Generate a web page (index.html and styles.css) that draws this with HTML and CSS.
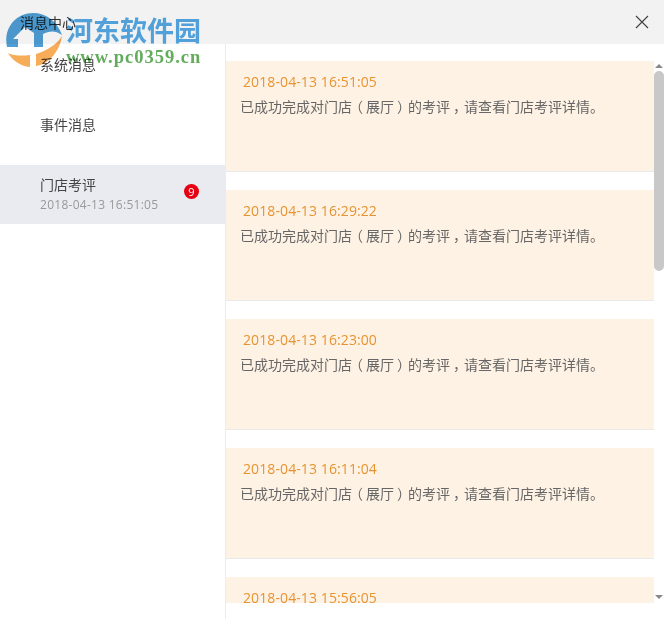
FILE: index.html
```html
<!DOCTYPE html>
<html lang="zh-CN">
<head>
<meta charset="utf-8">
<title>消息中心</title>
<link rel="stylesheet" href="styles.css">
</head>
<body>
<div class="app">
  <header class="titlebar">
    <span class="title">消息中心</span>
    <button class="close" aria-label="关闭">
      <svg width="14" height="14" viewBox="0 0 14 14"><path d="M1 1L13 13M13 1L1 13" stroke="#444" stroke-width="1.2" fill="none"/></svg>
    </button>
  </header>
  <div class="main">
    <nav class="sidebar">
      <div class="nav-item"><div class="nav-name">系统消息</div></div>
      <div class="nav-item"><div class="nav-name">事件消息</div></div>
      <div class="nav-item active">
        <div>
          <div class="nav-name">门店考评</div>
          <div class="nav-date">2018-04-13 16:51:05</div>
        </div>
        <span class="badge">9</span>
      </div>
    </nav>
    <section class="content">
      <div class="list">
        <article class="card"><div class="card-date">2018-04-13 16:51:05</div><p class="card-text">已成功完成对门店<span class="lp">（</span>展厅<span class="rp">）</span>的考评<span class="rp">，</span>请查看门店考评详情。</p></article>
        <article class="card"><div class="card-date">2018-04-13 16:29:22</div><p class="card-text">已成功完成对门店<span class="lp">（</span>展厅<span class="rp">）</span>的考评<span class="rp">，</span>请查看门店考评详情。</p></article>
        <article class="card"><div class="card-date">2018-04-13 16:23:00</div><p class="card-text">已成功完成对门店<span class="lp">（</span>展厅<span class="rp">）</span>的考评<span class="rp">，</span>请查看门店考评详情。</p></article>
        <article class="card"><div class="card-date">2018-04-13 16:11:04</div><p class="card-text">已成功完成对门店<span class="lp">（</span>展厅<span class="rp">）</span>的考评<span class="rp">，</span>请查看门店考评详情。</p></article>
        <article class="card"><div class="card-date">2018-04-13 15:56:05</div></article>
      </div>
      <div class="scrollbar">
        <span class="arrow-up"></span>
        <div class="track"><div class="thumb"></div></div>
        <span class="arrow-down"></span>
      </div>
    </section>
  </div>
  <div class="watermark">
    <svg class="wm-logo" width="75" height="75" viewBox="0 0 75 75">
      <path d="M7 47C3 28 16 13 33 13C46 13 57 21 62 35C55 30 49 31 43 34L43 47L34 47L34 33L25 27L13 39L18 39L18 47Z" fill="#4f9fd6"/>
      <path d="M8 53C14 56 22 56 30 55L30 67C20 66 12 60 8 53Z" fill="#f7ac58"/>
      <path d="M36 66C50 64 60 50 62 36C57 44 48 50 36 54Z" fill="#f7ac58"/>
    </svg>
    <div class="wm-name">河东软件园</div>
    <div class="wm-url">www.pc0359.cn</div>
  </div>
</div>
</body>
</html>
```

FILE: styles.css
```css
* { box-sizing: border-box; }
html, body { margin: 0; padding: 0; }
body {
  width: 664px;
  height: 619px;
  overflow: hidden;
  background: #fff;
  font-family: "Noto Sans CJK SC", "Open Sans", sans-serif;
  color: #555;
}
.app { position: relative; width: 664px; height: 619px; display: flex; flex-direction: column; }
.titlebar {
  height: 44px;
  flex: none;
  background: #f2f2f2;
  display: flex;
  align-items: center;
  justify-content: space-between;
  padding: 0 15px 0 20px;
}
.title { font-size: 14px; color: #333; }
.close { border: 0; background: none; padding: 0; width: 14px; height: 14px; display: block; }
.close svg { display: block; }
.main { flex: 1; display: flex; min-height: 0; }
.sidebar { width: 226px; flex: none; border-right: 1px solid #ececec; padding-top: 1px; }
.nav-item {
  height: 60px;
  padding: 9px 26px 0 40px;
  display: flex;
  align-items: flex-start;
  justify-content: space-between;
}
.nav-item.active { height: 59px; background: #e9ebf0; }
.nav-name { font-size: 14px; line-height: 20px; color: #444; }
.nav-date { font-size: 12px; line-height: 22px; color: #999; font-family: "Open Sans", sans-serif; letter-spacing: .27px; }
.badge {
  width: 15px;
  height: 15px;
  margin-top: 10px;
  border-radius: 50%;
  background: #e60012;
  color: #fff;
  font-size: 11px;
  line-height: 15px;
  text-align: center;
  font-family: "Open Sans", sans-serif;
}
.content { flex: 1; display: flex; min-width: 0; height: 559px; }
.list { flex: 1; padding-top: 17px; overflow: hidden; min-width: 0; }
.card {
  height: 111px;
  margin-bottom: 18px;
  background: #fef2e5;
  border-bottom: 1px solid #eaeaea;
  padding: 10px 0 0 14px;
}
.card-date { font-size: 14px; line-height: 22px; color: #e8932f; padding-left: 3px; font-family: "Open Sans", sans-serif; letter-spacing: .1px; }
.card-text { margin: 3px 0 0; font-size: 14px; line-height: 20px; color: #666; white-space: nowrap; }
.lp { margin-left: -3px; margin-right: 3px; }
.rp { margin-left: 3px; margin-right: -3px; }
.scrollbar { width: 10px; flex: none; display: flex; flex-direction: column; align-items: center; padding-top: 20px; height: 559px; }
.arrow-up { width: 0; height: 0; border: 4px solid transparent; border-top: 0; border-bottom: 4px solid #888; flex: none; }
.track { flex: 1; width: 100%; padding-top: 3px; }
.thumb { width: 100%; height: 200px; border-radius: 5px; background: #c8c8c8; }
.arrow-down { width: 0; height: 0; border: 4px solid transparent; border-bottom: 0; border-top: 4px solid #888; flex: none; margin-bottom: 4px; }
.watermark { position: absolute; left: 0; top: 0; width: 210px; height: 75px; pointer-events: none; mix-blend-mode: multiply; }
.wm-logo { position: absolute; left: 0; top: 0; }
.wm-name { position: absolute; left: 66px; top: 12px; font-family: "Noto Sans CJK SC", sans-serif; font-weight: 700; font-size: 27px; line-height: 36px; color: #55a9e6; white-space: nowrap; }
.wm-url { position: absolute; left: 66px; top: 46px; font-family: "Liberation Serif", serif; font-weight: 700; font-size: 18.5px; line-height: 22px; color: #62ac5c; white-space: nowrap; letter-spacing: 1px; }
```
